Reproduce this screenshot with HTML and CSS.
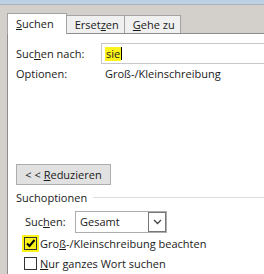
FILE: index.html
```html
<!DOCTYPE html>
<html lang="de">
<head>
    <meta charset="utf-8">
    <title>Suchen und Ersetzen</title>
    <link rel="stylesheet" href="styles.css">
</head>
<body>
<div class="titlebar"></div>
<div class="dialog">
    <div class="tabs">
        <div class="tab active"><u>S</u>uchen</div>
        <div class="tab">Erset<u>z</u>en</div>
        <div class="tab"><u>G</u>ehe zu</div>
    </div>
    <div class="panel">
        <div class="row find-row">
            <span class="label">Suc<u>h</u>en nach:</span>
            <div class="input"><span class="hl">sie</span><span class="caret"></span></div>
        </div>
        <div class="row opt-row">
            <span class="label">Optionen:</span>
            <span class="value">Groß-/Kleinschreibung</span>
        </div>
        <div class="spacer"></div>
        <button class="btn">&lt; &lt; <u>R</u>eduzieren</button>
        <div class="group-title"><span>Suchoptionen</span><span class="rule"></span></div>
        <div class="group">
            <div class="row select-row">
                <span class="label small">Suc<u>h</u>en:</span>
                <div class="select">
                    <span class="select-text">Gesamt</span>
                    <span class="select-arrow">
                        <svg width="9" height="6" viewBox="0 0 9 6"><path d="M1 1 L4.5 4.5 L8 1" fill="none" stroke="#444" stroke-width="1.3"/></svg>
                    </span>
                </div>
            </div>
            <div class="check-row">
                <span class="check-hl"><span class="box checked">
                    <svg width="11" height="11" viewBox="0 0 11 11"><path d="M2 5.5 L4.5 8 L9.5 2" fill="none" stroke="#000" stroke-width="2"/></svg>
                </span></span>
                <span>Gro<u>ß</u>-/Kleinschreibung beachten</span>
            </div>
            <div class="check-row">
                <span class="check-hl plain"><span class="box"></span></span>
                <span><u>N</u>ur ganzes Wort suchen</span>
            </div>
            <div class="check-row">
                <span class="check-hl plain"><span class="box"></span></span>
            </div>
        </div>
    </div>
</div>
</body>
</html>
```

FILE: styles.css
```css
body {
    margin: 0;
    width: 264px;
    height: 274px;
    overflow: hidden;
    background-color: #d3d0cb;
    font-family: "Open Sans", "Noto Sans", sans-serif;
    font-size: 11px;
    color: #1a1a1a;
}

.titlebar {
    height: 4px;
    background: linear-gradient(#b8cde6, #c4d2e2);
    border-bottom: 1px solid #a7b3c0;
}

.dialog {
    padding-left: 7px;
}

.tabs {
    display: flex;
    align-items: flex-end;
    height: 20px;
    margin-top: 8px;
}

.tab {
    height: 16px;
    padding: 1px 5px 0 8px;
    background-color: #f0f0f0;
    border: 1px solid #a3a3a3;
    border-bottom: none;
    border-left: none;
    line-height: 16px;
}

.tab.active {
    position: relative;
    height: 20px;
    margin-bottom: -1px;
    padding: 0 12px 0 8px;
    background-color: #fff;
    border-left: 1px solid #a3a3a3;
    line-height: 20px;
}

.panel {
    height: 260px;
    background-color: #fff;
    border-top: 1px solid #8d8d8d;
    border-left: 1px solid #8d8d8d;
    padding: 9px 0 0 8px;
    display: flex;
    flex-direction: column;
}

.row {
    display: flex;
    align-items: center;
}

.label {
    width: 85px;
    flex-shrink: 0;
}

.find-row {
    height: 21px;
}

.input {
    flex: 1;
    height: 19px;
    border: 1px solid #c8c8c8;
    border-right: none;
    display: flex;
    align-items: center;
    padding-left: 3px;
}

.hl {
    background-color: #fbf31a;
    line-height: 14px;
    padding: 0 1px;
}

.caret {
    width: 1px;
    height: 13px;
    background-color: #000;
}

.opt-row {
    height: 19px;
}

.value {
    padding-left: 4px;
}

.spacer {
    height: 81px;
}

.btn {
    align-self: flex-start;
    width: 95px;
    height: 21px;
    padding: 0;
    background-color: #e1e1e1;
    border: 1px solid #adadad;
    font-family: inherit;
    font-size: inherit;
    color: inherit;
}

.group-title {
    display: flex;
    align-items: center;
    height: 22px;
    margin-top: 1px;
}

.rule {
    flex: 1;
    height: 1px;
    margin-left: 6px;
    background-color: #dcdcdc;
}

.group {
    padding-left: 9px;
}

.select-row {
    height: 23px;
    margin-top: 2px;
}

.label.small {
    width: 50px;
}

.select {
    width: 90px;
    height: 20px;
    border: 1px solid #adadad;
    display: flex;
    align-items: center;
}

.select-text {
    flex: 1;
    padding-left: 4px;
}

.select-arrow {
    width: 16px;
    height: 18px;
    border: 1px solid #777;
    display: flex;
    align-items: center;
    justify-content: center;
}

.check-row {
    display: flex;
    align-items: center;
    height: 20px;
}

.check-hl {
    display: flex;
    align-items: center;
    justify-content: center;
    width: 17px;
    height: 17px;
    margin-left: -3px;
    margin-right: 1px;
    background-color: #fbf31a;
}

.check-hl.plain {
    background-color: transparent;
}

.box {
    width: 11px;
    height: 11px;
    border: 1px solid #333;
    background-color: #fff;
    display: flex;
    align-items: center;
    justify-content: center;
}

.box.checked {
    background-color: transparent;
}
```
